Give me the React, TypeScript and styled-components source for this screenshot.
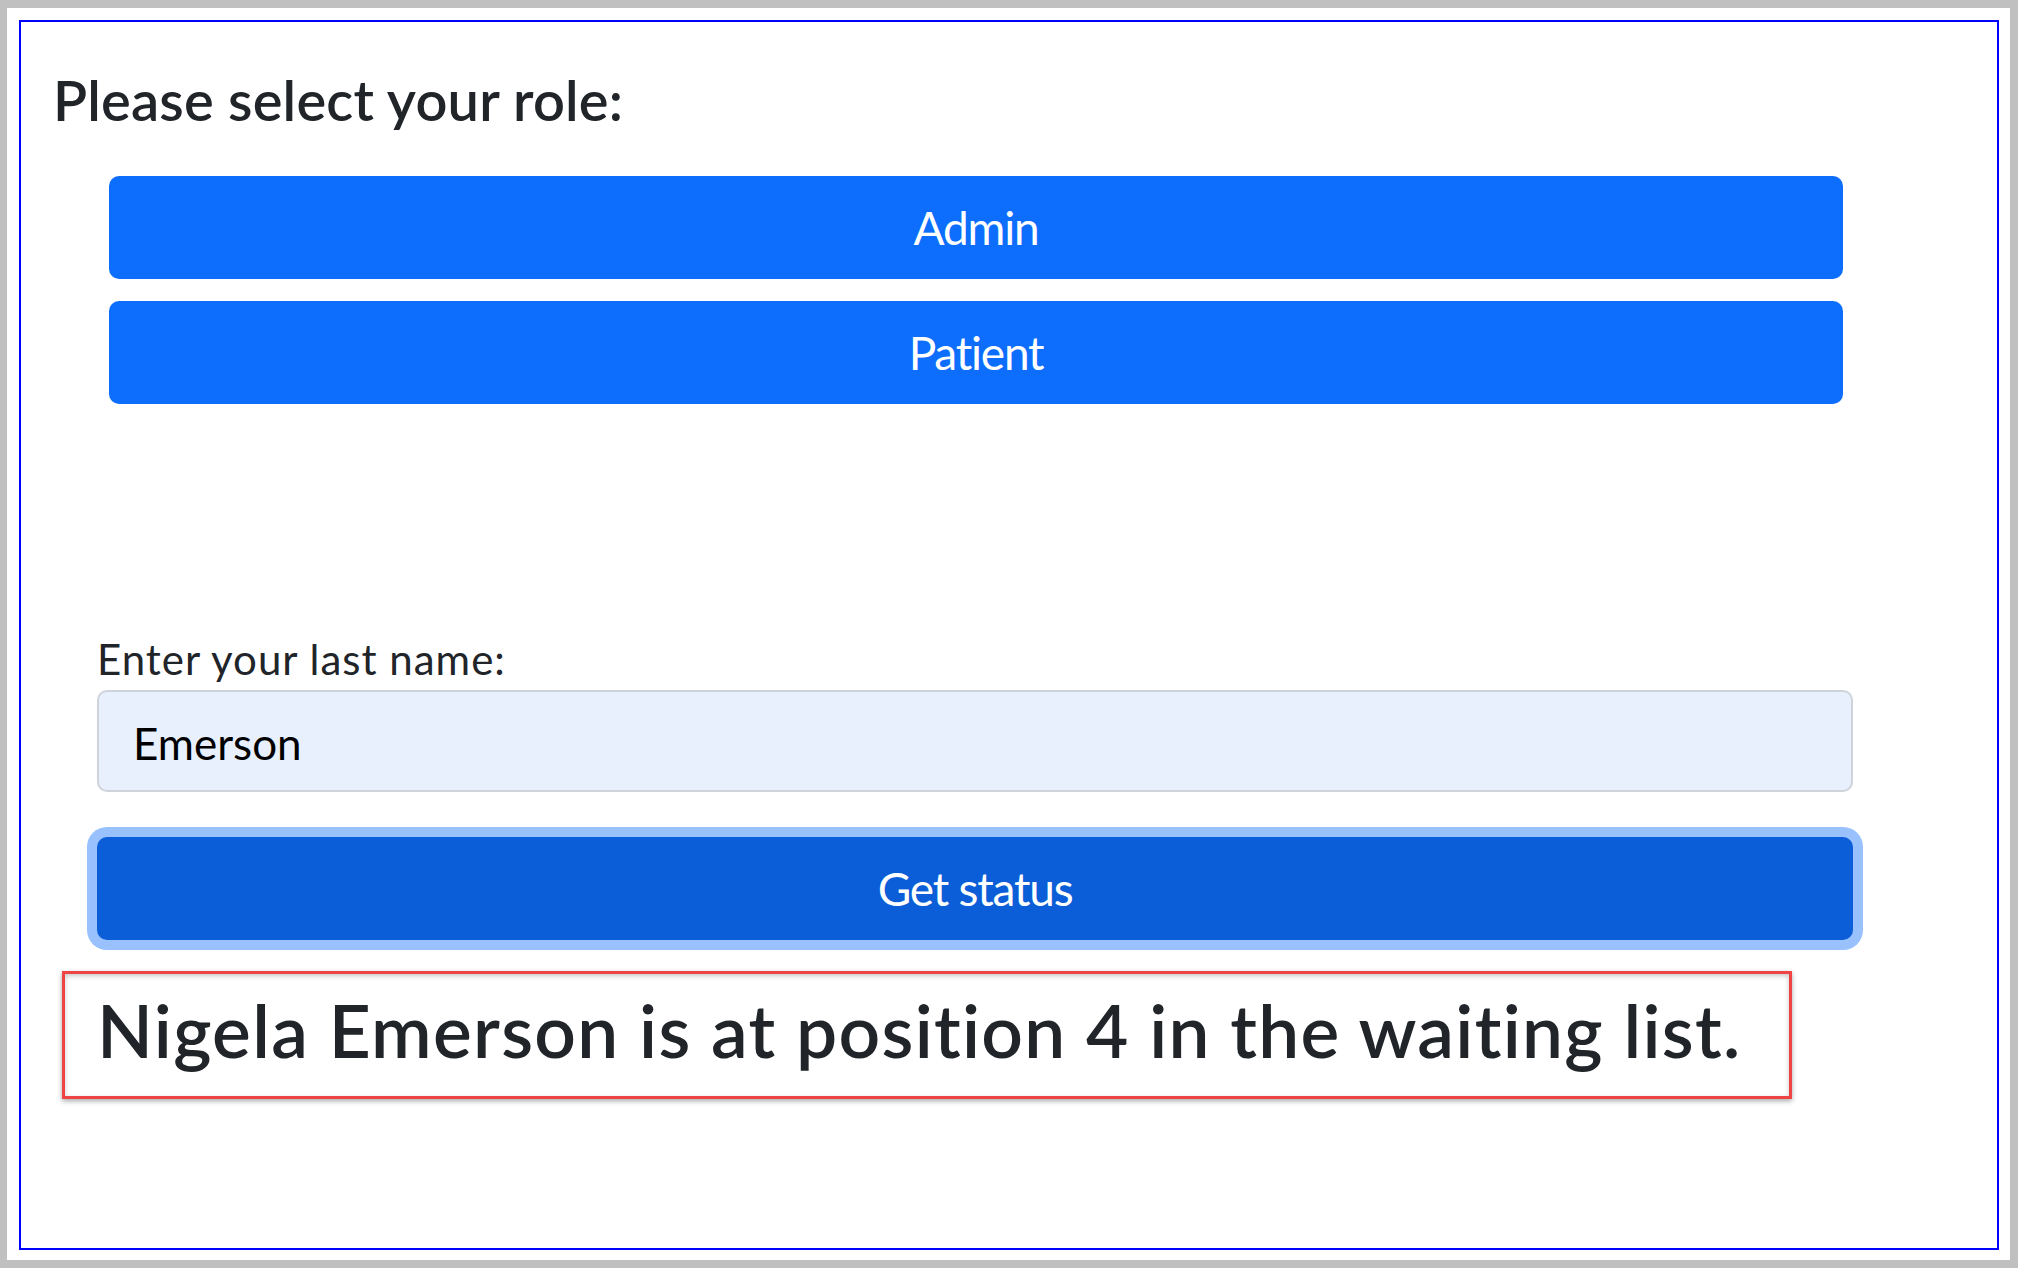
import React from "react";
import styled, { createGlobalStyle } from "styled-components";

const Global = createGlobalStyle`
  html, body {
    margin: 0;
    padding: 0;
    background: #c0c0c0;
  }
  body {
    font-family: Lato, "Open Sans", "Liberation Sans", sans-serif;
    font-variant-ligatures: none;
    color: #212529;
  }
  * { box-sizing: border-box; }
`;

const Frame = styled.div`
  margin: 8px 8px 8px 7px;
  height: 1252px;
  background: #ffffff;
  padding: 12px 11px 10px 12px;
`;

const Panel = styled.main`
  height: 100%;
  border: 2px solid #0000ff;
  display: flex;
  flex-direction: column;
  align-items: flex-start;
`;

const Heading = styled.h3`
  margin: 50px 0 0 32px;
  font-size: 56px;
  letter-spacing: 0.2px;
  line-height: 1;
  font-weight: 600;
  color: #212529;
`;

const RoleList = styled.div`
  margin: 48px 0 0 88px;
  width: 1734px;
  display: flex;
  flex-direction: column;
  gap: 22px;
`;

const PrimaryButton = styled.button<{ $active?: boolean }>`
  width: 100%;
  height: 103px;
  display: flex;
  align-items: center;
  justify-content: center;
  border: none;
  border-radius: 10px;
  background: ${(p) => (p.$active ? "#0b5ed7" : "#0d6efd")};
  box-shadow: ${(p) => (p.$active ? "0 0 0 10px #98c1fe" : "none")};
  color: #ffffff;
  font-family: inherit;
  font-variant-ligatures: none;
  font-size: 46px;
  letter-spacing: -1.2px;
  line-height: 1;
  font-weight: 400;
  cursor: pointer;
`;

const Form = styled.form`
  margin: 234px 0 0 76px;
  width: 1756px;
  display: flex;
  flex-direction: column;
`;

const Label = styled.label`
  font-size: 42px;
  letter-spacing: 1px;
  line-height: 1;
  color: #212529;
`;

const NameInput = styled.input`
  margin-top: 10px;
  height: 102px;
  width: 100%;
  padding: 4px 36px 0 34px;
  border: 2px solid #ced4da;
  border-radius: 10px;
  background: #e8f0fe;
  color: #000000;
  font-family: inherit;
  font-size: 44px;
  outline: none;
`;

const SubmitRow = styled.div`
  margin-top: 45px;
`;

const Result = styled.div`
  margin: 31px 0 0 41px;
  width: 1730px;
  height: 128px;
  padding: 20px 0 0 32px;
  border: 3px solid #ef4444;
  box-shadow: 0 2px 5px rgba(0, 0, 0, 0.35), inset 0 2px 5px rgba(0, 0, 0, 0.22);
  font-size: 73px;
  letter-spacing: 1.3px;
  line-height: 1;
  font-weight: 600;
  color: #212529;
  white-space: nowrap;
`;

export default function App() {
  return (
    <>
      <Global />
      <Frame>
        <Panel>
          <Heading>Please select your role:</Heading>
          <RoleList>
            <PrimaryButton type="button">Admin</PrimaryButton>
            <PrimaryButton type="button">Patient</PrimaryButton>
          </RoleList>
          <Form onSubmit={(e) => e.preventDefault()}>
            <Label htmlFor="lastname">Enter your last name:</Label>
            <NameInput id="lastname" defaultValue="Emerson" />
            <SubmitRow>
              <PrimaryButton type="submit" $active>
                Get status
              </PrimaryButton>
            </SubmitRow>
          </Form>
          <Result>Nigela Emerson is at position 4 in the waiting list.</Result>
        </Panel>
      </Frame>
    </>
  );
}
